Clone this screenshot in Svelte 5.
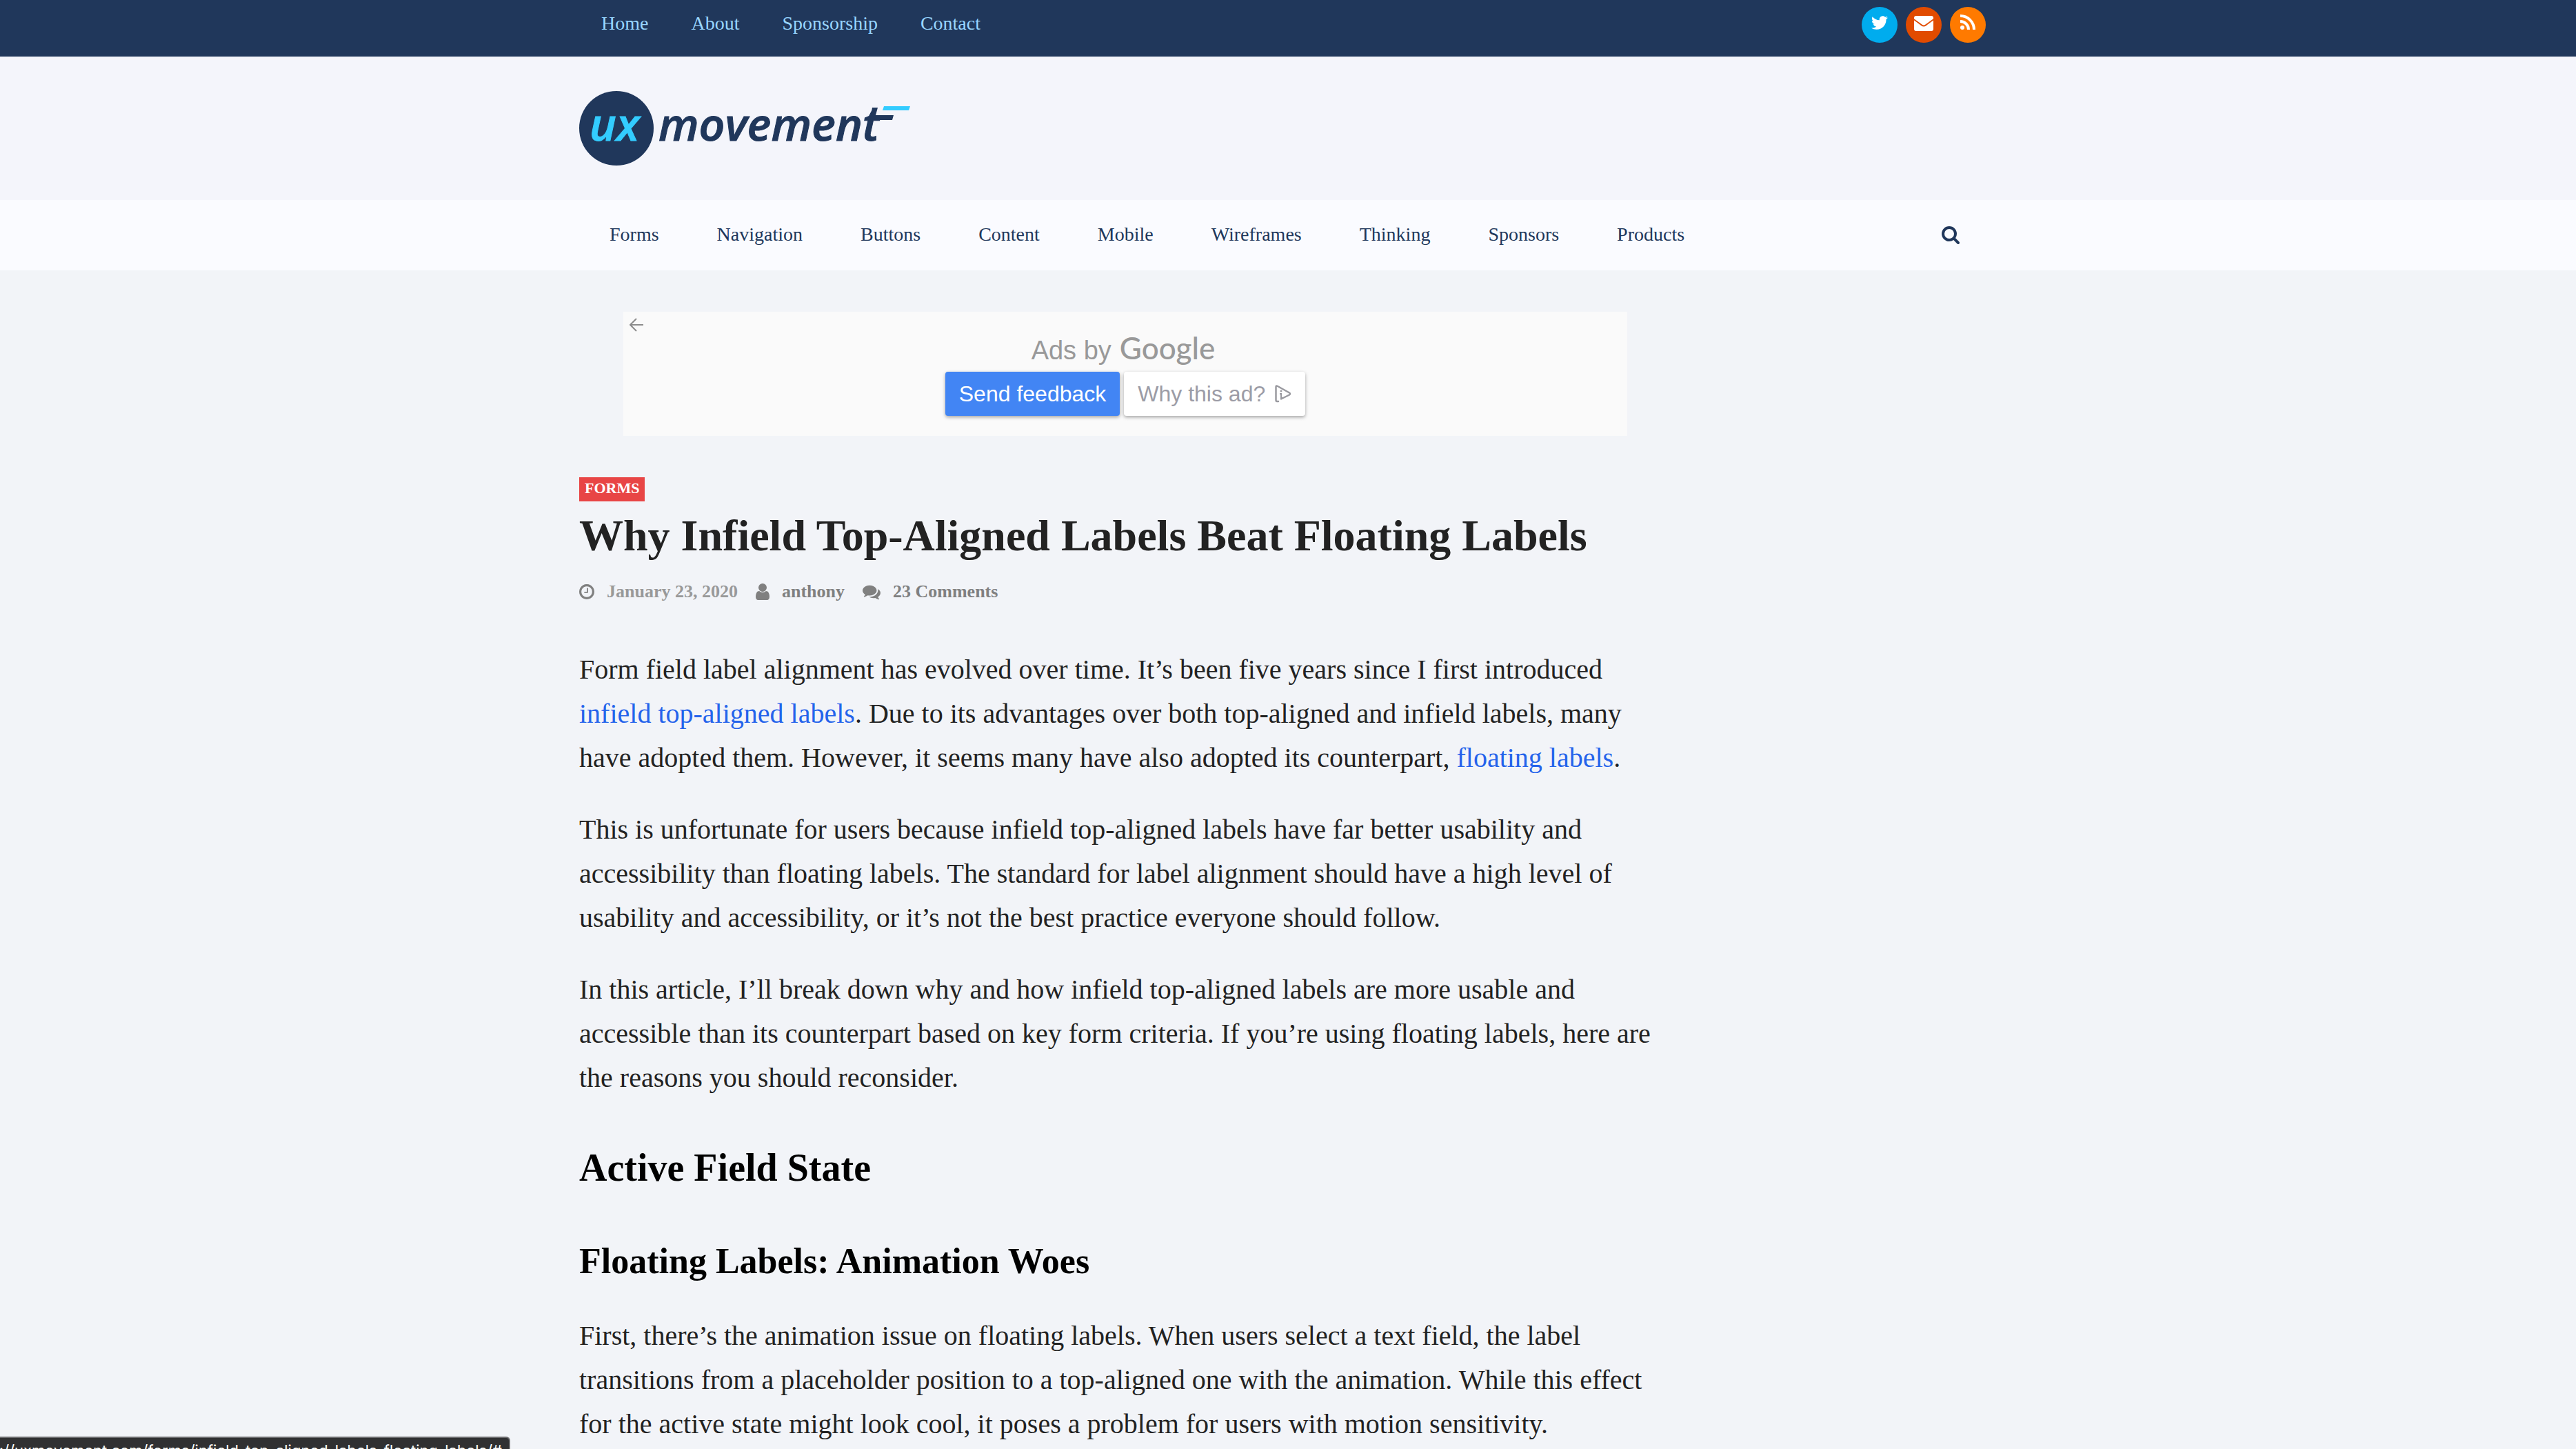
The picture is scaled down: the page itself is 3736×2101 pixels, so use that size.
<script>
  const topLinks = ['Home', 'About', 'Sponsorship', 'Contact'];
  const sections = ['Forms', 'Navigation', 'Buttons', 'Content', 'Mobile', 'Wireframes', 'Thinking', 'Sponsors', 'Products'];
</script>

<div class="topbar">
  <div class="container topbar-inner">
    <nav class="top-nav" aria-label="Site">
      {#each topLinks as link}
        <a href="#top">{link}</a>
      {/each}
    </nav>
    <div class="social">
      <a class="twitter" href="#twitter" aria-label="Twitter">
        <svg width="24" height="24" viewBox="0 0 512 512"><path fill="#fff" d="M459.37 151.716c.325 4.548.325 9.097.325 13.645 0 138.72-105.583 298.558-298.558 298.558-59.452 0-114.68-17.219-161.137-47.106 8.447.974 16.568 1.299 25.34 1.299 49.055 0 94.213-16.568 130.274-44.832-46.132-.975-84.792-31.188-98.112-72.772 6.498.974 12.995 1.624 19.818 1.624 9.421 0 18.843-1.3 27.614-3.573-48.081-9.747-84.143-51.98-84.143-102.985v-1.299c13.969 7.797 30.214 12.67 47.431 13.319-28.264-18.843-46.781-51.005-46.781-87.391 0-19.492 5.197-37.36 14.294-52.954 51.655 63.675 129.3 105.258 216.365 109.807-1.624-7.797-2.599-15.918-2.599-24.04 0-57.828 46.782-104.934 104.934-104.934 30.213 0 57.502 12.67 76.67 33.137 23.715-4.548 46.456-13.32 66.599-25.34-7.798 24.366-24.366 44.833-46.132 57.827 21.117-2.273 41.584-8.122 60.426-16.243-14.292 20.791-32.161 39.308-52.628 54.253z"/></svg>
      </a>
      <a class="email" href="#email" aria-label="Email">
        <svg width="28" height="24" viewBox="0 0 28 24"><path fill="#fff" d="M3 2h22a3 3 0 0 1 3 3v1.200Q22 10.500 16.500 14.500Q14 16.300 11.500 14.500Q6 10.500 0 6.200V5a3 3 0 0 1 3-3zM0 8.500Q5 12 10.500 16.200Q14 18.600 17.500 16.200Q23 12 28 8.500V21a3 3 0 0 1-3 3H3a3 3 0 0 1-3-3z"/></svg>
      </a>
      <a class="rss" href="#rss" aria-label="RSS">
        <svg width="22" height="22" viewBox="0 0 22 22"><circle cx="3" cy="19" r="3" fill="#fff"/><path fill="none" stroke="#fff" stroke-width="4" d="M0 10A12 12 0 0 1 12 22M0 2A20 20 0 0 1 20 22"/></svg>
      </a>
    </div>
  </div>
</div>

<header class="masthead">
  <div class="container">
    <a class="logo" href="#home" aria-label="UX Movement">
      <svg width="480" height="108" viewBox="0 0 480 108">
        <circle cx="54" cy="54" r="54" fill="#20375b"/>
        <text class="logo-text" x="15" y="72" fill="#33ccff" stroke="#33ccff">ux</text>
        <text class="logo-text" x="115" y="72" fill="#20375b" stroke="#20375b">movement</text>
        <path fill="#20375b" d="M425 24h8l-3 11h26l-2 7h-32z"/>
        <path fill="#33ccff" d="M442 22h38l-2 6h-38z"/>
      </svg>
    </a>
  </div>
</header>

<div class="menubar">
  <div class="container menubar-inner">
    <nav class="main-nav" aria-label="Topics">
      {#each sections as section}
        <a href="#topic">{section}</a>
      {/each}
    </nav>
    <button class="search" aria-label="Search">
      <svg width="28" height="28" viewBox="0 0 1792 1792"><path fill="#20375b" d="M1152 832q0-185-131.500-316.500t-316.500-131.500-316.500 131.500-131.500 316.500 131.500 316.500 316.500 131.500 316.500-131.500 131.500-316.500zm512 832q0 52-38 90t-90 38q-54 0-90-38l-343-342q-179 124-399 124-143 0-273.500-55.500t-225-150-150-225-55.500-273.500 55.500-273.500 150-225 225-150 273.500-55.500 273.500 55.500 225 150 150 225 55.500 273.500q0 220-124 399l343 343q37 37 37 90z"/></svg>
    </button>
  </div>
</div>

<main class="container">
  <div class="column">
    <aside class="ad">
      <button class="back" aria-label="Back">
        <svg width="20" height="20" viewBox="0 0 20 20"><path fill="none" stroke="#8c8c8c" stroke-width="2" d="M20 10H2M10 1L1 10L10 19"/></svg>
      </button>
      <div class="ad-title"><span>Ads by</span><span class="google">Google</span></div>
      <div class="ad-buttons">
        <button class="feedback">Send feedback</button>
        <button class="why">Why this ad?
          <svg width="24" height="26" viewBox="0 0 24 26"><path fill="none" stroke="#9a9aa0" stroke-width="2.500" stroke-linejoin="round" stroke-linecap="round" d="M5 24H3Q1.500 24 1.500 22V3Q1.500 .5 4 2L21 11.500Q23 13 21 14.500L9 20.500"/><circle cx="9" cy="9" r="1.500" fill="#9a9aa0"/><path fill="none" stroke="#9a9aa0" stroke-width="2" d="M7 13h2v6h2"/></svg>
        </button>
      </div>
    </aside>

    <article>
      <a class="badge" href="#forms">FORMS</a>
      <h1>Why Infield Top-Aligned Labels Beat Floating Labels</h1>
      <div class="meta">
        <span class="item">
          <svg width="22" height="22" viewBox="128 128 1536 1536"><path fill="#808080" d="M1024 544v448q0 14-9 23t-23 9h-320q-14 0-23-9t-9-23v-64q0-14 9-23t23-9h224v-352q0-14 9-23t23-9h64q14 0 23 9t9 23zm416 352q0-148-73-273t-198-198-273-73-273 73-198 198-73 273 73 273 198 198 273 73 273-73 198-198 73-273zm224 0q0 209-103 385.500t-279.500 279.500-385.500 103-385.500-103-279.500-279.500-103-385.500 103-385.500 279.500-279.500 385.500-103 385.500 103 279.500 279.500 103 385.500z"/></svg>
          <time datetime="2020-01-23">January 23, 2020</time>
        </span>
        <span class="item">
          <svg width="20" height="24" viewBox="256 128 1280 1536"><path fill="#808080" d="M1536 1399q0 109-62.500 187t-150.500 78h-854q-88 0-150.500-78t-62.500-187q0-85 8.500-160.500t31.500-152 58.500-131 94-89 134.500-34.500q131 128 313 128t313-128q76 0 134.500 34.500t94 89 58.500 131 31.500 152 8.500 160.500zm-256-887q0 159-112.500 271.500t-271.500 112.500-271.500-112.500-112.500-271.500 112.500-271.500 271.500-112.500 271.500 112.500 112.500 271.500z"/></svg>
          <a href="#author">anthony</a>
        </span>
        <span class="item">
          <svg width="26" height="26" viewBox="0 0 1792 1792"><path fill="#808080" d="M1408 768q0 139-94 257t-256.500 186.500-353.500 68.500q-86 0-176-16-124 88-278 128-36 9-86 16h-3q-11 0-20.500-8t-11.500-21q-1-3-1-6.500t.5-6.500 2-6l2.500-5 3.500-5.500 4-5 4.500-5 4-4.500q5-6 23-25t26-29.500 22.500-29 25-38.500 20.500-44q-124-72-195-177t-71-224q0-139 94-257t256.500-186.500 353.500-68.500 353.500 68.500 256.500 186.500 94 257zm384 256q0 120-71 224.500t-195 176.500q10 24 20.500 44t25 38.500 22.500 29 26 29.500 23 25q1 1 4 4.500t4.500 5 4 5 3.500 5.500l2.500 5 2 6 .5 6.500-1 6.500q-3 14-13 22t-22 7q-50-7-86-16-154-40-278-128-90 16-176 16-271 0-472-132 58 4 88 4 161 0 309-45t264-129q125-92 192-212t67-254q0-77-23-152 129 71 204 178t75 230z"/></svg>
          <a href="#comments">23 Comments</a>
        </span>
      </div>

      <p>Form field label alignment has evolved over time. It’s been five years since I first introduced <a href="#infield">infield top-aligned labels</a>. Due to its advantages over both top-aligned and infield labels, many have adopted them. However, it seems many have also adopted its counterpart, <a href="#floating">floating labels</a>.</p>
      <p>This is unfortunate for users because infield top-aligned labels have far better usability and accessibility than floating labels. The standard for label alignment should have a high level of usability and accessibility, or it’s not the best practice everyone should follow.</p>
      <p>In this article, I’ll break down why and how infield top-aligned labels are more usable and accessible than its counterpart based on key form criteria. If you’re using floating labels, here are the reasons you should reconsider.</p>
      <h2>Active Field State</h2>
      <h3>Floating Labels: Animation Woes</h3>
      <p>First, there’s the animation issue on floating labels. When users select a text field, the label transitions from a placeholder position to a top-aligned one with the animation. While this effect for the active state might look cool, it poses a problem for users with motion sensitivity.</p>
    </article>
  </div>
</main>

<div class="status"><span>https://uxmovement.com/forms/infield-top-aligned-labels-floating-labels/#</span></div>

<style>
  :global(html), :global(body) {
    height: 100%;
    overflow: hidden;
  }
  :global(body) {
    margin: 0;
    background: #f2f4f8;
    font-family: "Liberation Serif", "Times New Roman", serif;
    color: #222;
  }
  a {
    text-decoration: none;
    color: inherit;
  }
  button {
    margin: 0;
    padding: 0;
    border: 0;
    background: none;
    font: inherit;
    color: inherit;
  }
  svg {
    display: block;
    flex: none;
  }
  .container {
    max-width: 2056px;
    margin: 0 auto;
  }
  .topbar {
    background: #20375b;
  }
  .topbar-inner {
    display: flex;
    justify-content: space-between;
    align-items: flex-start;
    box-sizing: border-box;
    height: 82px;
    padding: 10px 16px 0 32px;
  }
  .top-nav {
    display: flex;
    gap: 62px;
    padding-top: 8px;
    font-size: 28px;
    line-height: 32px;
    color: #99d6ff;
  }
  .social {
    display: flex;
    gap: 12px;
  }
  .social a {
    display: flex;
    justify-content: center;
    box-sizing: border-box;
    width: 52px;
    height: 52px;
    padding-top: 11px;
    border-radius: 50%;
  }
  .twitter {
    background: #00acee;
  }
  .email {
    background: #e14b00;
  }
  .rss {
    background: #ff7a00;
  }
  .masthead {
    padding: 50px 0;
    background: #f4f5fb;
  }
  .logo {
    display: block;
    width: 480px;
  }
  .logo-text {
    font-family: "Open Sans", sans-serif;
    font-size: 66px;
    font-style: italic;
    font-weight: 600;
    stroke-width: 1px;
  }
  .menubar {
    background: #fafbff;
  }
  .menubar-inner {
    display: flex;
    justify-content: space-between;
    align-items: center;
    box-sizing: border-box;
    height: 102px;
    padding: 0 52px 2px 44px;
  }
  .main-nav {
    display: flex;
    gap: 84px;
    font-size: 28px;
    line-height: 32px;
    color: #20375b;
  }
  .column {
    max-width: 1584px;
    padding-top: 60px;
  }
  .ad {
    position: relative;
    box-sizing: border-box;
    max-width: 1456px;
    height: 180px;
    margin: 0 auto 60px;
    padding-top: 26px;
    background: #fafafa;
    font-family: "Liberation Sans", Arial, sans-serif;
  }
  .back {
    position: absolute;
    top: 9px;
    left: 9px;
  }
  .ad-title {
    display: flex;
    justify-content: center;
    align-items: baseline;
    gap: 12px;
    height: 61px;
    padding-right: 6px;
    font-size: 38px;
    line-height: 52px;
    color: #999;
  }
  .google {
    font-family: Lato, sans-serif;
    font-size: 44px;
    font-weight: 500;
  }
  .ad-buttons {
    display: flex;
    justify-content: center;
    gap: 6px;
    font-size: 32px;
  }
  .ad-buttons button {
    display: flex;
    align-items: center;
    gap: 14px;
    height: 64px;
    padding: 0 20px;
    border-radius: 4px;
    box-shadow: 0 2px 5px rgba(0, 0, 0, 0.35);
  }
  .feedback {
    background: #4285f4;
    color: #fff;
  }
  .why {
    background: #fff;
    color: #9c9ca6;
  }
  .badge {
    display: block;
    width: fit-content;
    padding: 0 8px 4px;
    background: #e84545;
    color: #fff;
    font-size: 22px;
    font-weight: bold;
    line-height: 31px;
  }
  h1 {
    margin: 12px 0 27px;
    font-size: 64px;
    line-height: 76px;
  }
  .meta {
    display: flex;
    gap: 26px;
    margin-bottom: 65px;
    font-size: 26px;
    font-weight: bold;
    line-height: 32px;
    color: #808080;
  }
  .item {
    display: flex;
    align-items: center;
    gap: 18px;
  }
  time {
    color: #999;
  }
  p {
    margin: 0 0 40px;
    font-size: 40px;
    line-height: 64px;
  }
  p a {
    color: #2463eb;
  }
  h2 {
    margin: 62px 0 68px;
    color: #000;
    font-size: 56px;
    line-height: 72px;
  }
  h3 {
    margin: 0 0 44px;
    color: #000;
    font-size: 52px;
    line-height: 64px;
  }
  .status {
    position: fixed;
    bottom: 0;
    left: 0;
    display: flex;
    justify-content: flex-end;
    box-sizing: border-box;
    width: 740px;
    height: 18px;
    padding: 2px 10px 0 0;
    overflow: hidden;
    border-top: 2px solid #6a6a6c;
    border-right: 2px solid #6a6a6c;
    border-radius: 0 6px 0 0;
    background: #303032;
    color: #fff;
    font-family: Inter, sans-serif;
    font-size: 22px;
    line-height: 32px;
    white-space: nowrap;
  }
</style>
